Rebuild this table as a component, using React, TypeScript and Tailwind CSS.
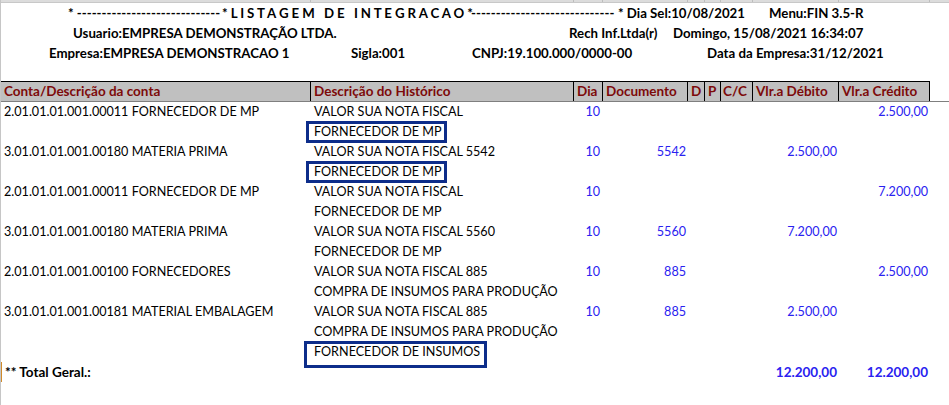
import React from 'react';

interface Linha {
  conta?: string;
  hist: string;
  dia?: string;
  doc?: string;
  debito?: string;
  credito?: string;
  marcado?: 'mp' | 'insumos';
}

const linhas: Linha[] = [
  { conta: '2.01.01.01.001.00011 FORNECEDOR DE MP', hist: 'VALOR SUA NOTA FISCAL', dia: '10', credito: '2.500,00' },
  { hist: 'FORNECEDOR DE MP', marcado: 'mp' },
  { conta: '3.01.01.01.001.00180 MATERIA PRIMA', hist: 'VALOR SUA NOTA FISCAL 5542', dia: '10', doc: '5542', debito: '2.500,00' },
  { hist: 'FORNECEDOR DE MP', marcado: 'mp' },
  { conta: '2.01.01.01.001.00011 FORNECEDOR DE MP', hist: 'VALOR SUA NOTA FISCAL', dia: '10', credito: '7.200,00' },
  { hist: 'FORNECEDOR DE MP' },
  { conta: '3.01.01.01.001.00180 MATERIA PRIMA', hist: 'VALOR SUA NOTA FISCAL 5560', dia: '10', doc: '5560', debito: '7.200,00' },
  { hist: 'FORNECEDOR DE MP' },
  { conta: '2.01.01.01.001.00100 FORNECEDORES', hist: 'VALOR SUA NOTA FISCAL 885', dia: '10', doc: '885', credito: '2.500,00' },
  { hist: 'COMPRA DE INSUMOS PARA PRODUÇÃO' },
  { conta: '3.01.01.01.001.00181 MATERIAL EMBALAGEM', hist: 'VALOR SUA NOTA FISCAL 885', dia: '10', doc: '885', debito: '2.500,00' },
  { hist: 'COMPRA DE INSUMOS PARA PRODUÇÃO' },
  { hist: 'FORNECEDOR DE INSUMOS', marcado: 'insumos' },
];

const cols = 'grid grid-cols-[310px_263px_29px_85px_17px_16px_32px_86px_91px]';
const azul = 'text-[#2a22f0]';

const App = () => {
  return (
    <div className="w-[949px] h-[405px] bg-white overflow-hidden border-l border-[#c6c6c6] font-['Lato','Liberation_Sans',sans-serif] text-[12.6px] text-black">
      {/* resto da linha de cima da planilha */}
      <div className={`${cols} h-[3px] bg-[#dcdcdc] border-b border-[#c8c8c8]`}>
        {Array.from({ length: 9 }).map((_, i) => (
          <div key={i} className="border-r border-[#bdbdbd]" />
        ))}
      </div>

      {/* cabeçalho do relatório */}
      <div className="font-bold text-[13.25px] leading-[20px] whitespace-pre">
        <div className="flex h-[20px] pl-[67px]">
          <span className="w-[154px] shrink-0">* -----------------------------</span>
          <span className="w-[249px] shrink-0 tracking-[-0.1px]">* L I S T A G E M   D E   I N T E G R A C A O *</span>
          <span className="w-[147px] shrink-0">-----------------------------</span>
          <span className="w-[151px] shrink-0">* Dia Sel:10/08/2021</span>
          <span>Menu:FIN 3.5-R</span>
        </div>
        <div className="flex h-[20px] pl-[72px]">
          <span className="w-[496px] shrink-0">Usuario:EMPRESA DEMONSTRAÇÃO LTDA.</span>
          <span className="w-[104px] shrink-0">Rech Inf.Ltda(r)</span>
          <span>Domingo, 15/08/2021 16:34:07</span>
        </div>
        <div className="flex h-[20px] pl-[48px]">
          <span className="w-[302px] shrink-0">Empresa:EMPRESA DEMONSTRACAO 1</span>
          <span className="w-[121px] shrink-0">Sigla:001</span>
          <span className="w-[235px] shrink-0">CNPJ:19.100.000/0000-00</span>
          <span>Data da Empresa:31/12/2021</span>
        </div>
      </div>

      <div className="h-[18px]" />

      {/* títulos das colunas */}
      <div className="border-b border-[#7f7f7f]">
        <div className={`${cols} w-[929px] h-[20px] bg-[#c0c0c0] border-t border-black font-bold text-[13.5px] text-[#7d0a0a] leading-[19px] whitespace-nowrap`}>
          <div className="border-r border-black pl-[3px]">Conta/Descrição da conta</div>
          <div className="border-r border-black pl-[3px]">Descrição do Histórico</div>
          <div className="border-r border-black pl-[3px]">Dia</div>
          <div className="border-r border-black pl-[3px]">Documento</div>
          <div className="border-r border-black pl-[3px]">D</div>
          <div className="border-r border-black pl-[3px]">P</div>
          <div className="border-r border-black pl-[2px]">C/C</div>
          <div className="border-r border-black pl-[3px]">Vlr.a Débito</div>
          <div className="border-r border-black pl-[3px]">Vlr.a Crédito</div>
        </div>
      </div>

      {/* lançamentos */}
      {linhas.map((l, i) => (
        <div key={i} className={`${cols} h-[20px] leading-[20px] whitespace-nowrap`}>
          <div className="pl-[3px]">{l.conta}</div>
          <div className="relative pl-[3px]">
            {l.hist}
            {l.marcado === 'mp' && (
              <div className="absolute left-[-5px] top-[-1px] w-[141px] h-[22px] border-[3px] border-[#0d2d8a]" />
            )}
            {l.marcado === 'insumos' && (
              <div className="absolute left-[-7px] top-[-1px] w-[183px] h-[27px] border-[3px] border-[#0d2d8a]" />
            )}
          </div>
          <div className={`text-right pr-[3px] ${azul}`}>{l.dia}</div>
          <div className={`text-right pr-[2px] ${azul}`}>{l.doc}</div>
          <div />
          <div />
          <div />
          <div className={`text-right pr-[2px] ${azul}`}>{l.debito}</div>
          <div className={`text-right pr-[2px] ${azul}`}>{l.credito}</div>
        </div>
      ))}

      {/* total */}
      <div className={`${cols} h-[20px] leading-[20px] font-bold text-[13.5px] whitespace-nowrap`}>
        <div className="pl-[3px] border-l-2 border-[#d08a2a] -ml-px">** Total Geral.:</div>
        <div />
        <div />
        <div />
        <div />
        <div />
        <div />
        <div className={`text-right pr-[2px] ${azul}`}>12.200,00</div>
        <div className={`text-right pr-[2px] ${azul}`}>12.200,00</div>
      </div>
    </div>
  );
};

export default App;
